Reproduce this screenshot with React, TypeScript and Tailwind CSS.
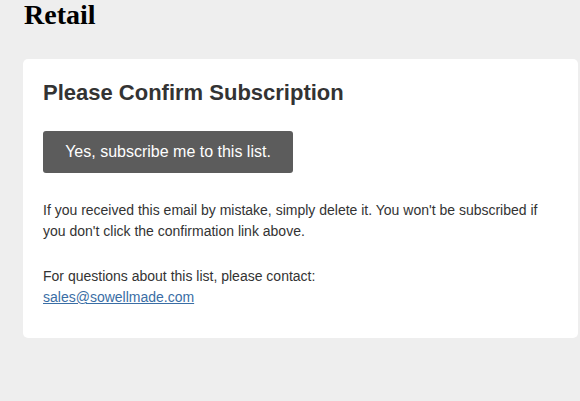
export default function App() {
  return (
    <div className="min-h-[401px] bg-[#eeeeee] px-[23px] pb-16">
      <h1 className="pl-px pt-px font-['Liberation_Serif',serif] text-[28px] font-bold leading-[28px] text-black">
        Retail
      </h1>
      <div className="mt-[30px] w-[555px] rounded-[5px] bg-white px-5 pt-[19px] pb-[30px] font-['Liberation_Sans',Arial,sans-serif] text-[#333333]">
        <h2 className="text-[22px] font-bold leading-[30px]">
          Please Confirm Subscription
        </h2>
        <a
          href="#"
          className="mt-[23px] inline-block w-[250px] rounded-[3px] bg-[#5c5c5c] py-[10px] text-center text-[16px] leading-[22px] text-white"
        >
          Yes, subscribe me to this list.
        </a>
        <p className="mt-[27px] w-[515px] text-[14px] leading-[21px]">
          If you received this email by mistake, simply delete it. You won't be
          subscribed if you don't click the confirmation link above.
        </p>
        <p className="mt-[24px] text-[14px] leading-[21px]">
          For questions about this list, please contact:
          <br />
          <a href="#" className="text-[#3a6ea5] underline">
            sales@sowellmade.com
          </a>
        </p>
      </div>
    </div>
  );
}
